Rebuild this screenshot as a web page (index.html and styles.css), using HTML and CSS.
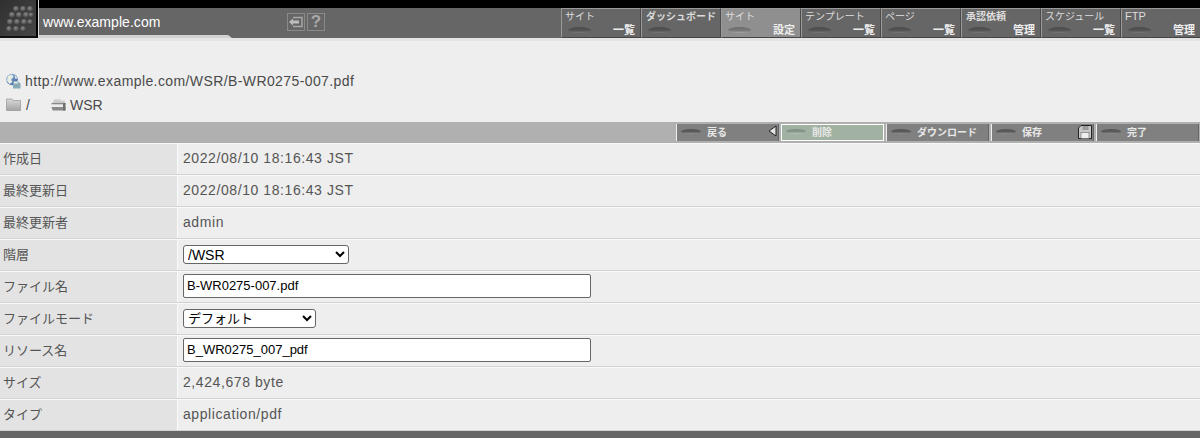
FILE: index.html
```html
<!DOCTYPE html>
<html lang="ja">
<head>
<meta charset="utf-8">
<title>ファイル詳細</title>
<link rel="stylesheet" href="styles.css">
</head>
<body>
<svg class="defs" width="0" height="0"><defs>
<radialGradient id="dot" cx="45%" cy="35%" r="70%"><stop offset="0" stop-color="#8c8c8c"/><stop offset="1" stop-color="#333"/></radialGradient>
<linearGradient id="fold" x1="0" y1="0" x2="0" y2="1"><stop offset="0" stop-color="#d8d8d8"/><stop offset="1" stop-color="#a4a4a4"/></linearGradient>
<linearGradient id="globe" x1="0" y1="0" x2="1" y2="1"><stop offset="0" stop-color="#a9c4e6"/><stop offset="1" stop-color="#2f5a96"/></linearGradient>
</defs></svg>
<header class="topbar">
  <div class="logo">
    <svg width="34" height="27" viewBox="0 0 34 27">
      <g fill="url(#dot)">
        <circle cx="16" cy="4" r="3"/><circle cx="23" cy="4" r="3"/><circle cx="30" cy="4" r="3"/>
        <circle cx="12" cy="10" r="3.100"/><circle cx="19" cy="10" r="3.100"/><circle cx="26" cy="10" r="3.100"/><circle cx="31" cy="10" r="2.600"/>
        <circle cx="10" cy="17" r="3.100"/><circle cx="17" cy="17" r="3.100"/><circle cx="24" cy="17" r="3.100"/><circle cx="30" cy="17" r="2.800"/>
        <circle cx="9" cy="24" r="2.900"/><circle cx="16" cy="24" r="2.900"/><circle cx="23" cy="24" r="2.900"/>
      </g>
    </svg>
  </div>
  <div class="topmain">
    <div class="blackline"></div>
    <div class="toprow">
      <div class="sitebox">
        <div class="sitename">www.example.com</div>
        <div class="sitetabs">
          <span class="iconbtn"><svg width="16" height="14" viewBox="0 0 16 14"><path d="M5 2.500H14V11.500H5" fill="none" stroke="#a8a8a8" stroke-width="1.4"/><path d="M1 7L5 3.500V5.600H11V8.400H5V10.500Z" fill="#bdbdbd"/></svg></span>
          <span class="iconbtn qmark">?</span>
        </div>
        <div class="siteedge"></div>
      </div>
      <nav class="nav">
        <a class="navbtn"><span class="navtop">サイト</span><span class="navbot"><i class="pill"></i><b>一覧</b></span></a>
        <a class="navbtn"><span class="navtop">ダッシュボード</span><span class="navbot"><i class="pill"></i></span></a>
        <a class="navbtn active"><span class="navtop">サイト</span><span class="navbot"><i class="pill"></i><b>設定</b></span></a>
        <a class="navbtn"><span class="navtop">テンプレート</span><span class="navbot"><i class="pill"></i><b>一覧</b></span></a>
        <a class="navbtn"><span class="navtop">ページ</span><span class="navbot"><i class="pill"></i><b>一覧</b></span></a>
        <a class="navbtn"><span class="navtop">承認依頼</span><span class="navbot"><i class="pill"></i><b>管理</b></span></a>
        <a class="navbtn"><span class="navtop">スケジュール</span><span class="navbot"><i class="pill"></i><b>一覧</b></span></a>
        <a class="navbtn"><span class="navtop">FTP</span><span class="navbot"><i class="pill"></i><b>管理</b></span></a>
      </nav>
    </div>
  </div>
</header>
<div class="strip"></div>
<section class="paths">
  <div class="urlline">
    <svg class="ico" width="16" height="16" viewBox="0 0 16 16"><circle cx="7" cy="6.500" r="5.800" fill="url(#globe)"/><path d="M3 3L7 1.500L8.500 4L6 6.500L7.500 9L4.500 11L2 7.500Z" fill="#e9eee4"/><path d="M9.500 2L12.500 5L10.500 6Z" fill="#eef2ee"/><path d="M8 8.500H13L15.500 10.500V15.500H8Z" fill="#87a9b6"/><path d="M9 8.500H12.500L13 10.500H9Z" fill="#e2e8ea"/></svg>
    <span>http://www.example.com/WSR/B-WR0275-007.pdf</span>
  </div>
  <div class="crumbs">
    <svg class="ico" width="15" height="13" viewBox="0 0 15 13"><path d="M.5 1H6L7 2.500H14.500V12.500H.5Z" fill="url(#fold)" stroke="#8c8c8c" stroke-width=".6"/></svg>
    <span class="crumb1">/</span>
    <svg class="ico" width="15" height="13" viewBox="0 0 15 13"><path d="M3 1H9L10 2.500H14V12H2V4Z" fill="url(#fold)"/><path d="M.5 5H14.500V6.400H.5ZM.5 9H14.500V12.500H1.500Z" fill="#8a8a8a"/><path d="M.5 6.400H14.500V9H.5Z" fill="#ececec"/><path d="M12 5H14.500V12.500H12Z" fill="#707070"/></svg>
    <span class="crumb2">WSR</span>
  </div>
</section>
<div class="actions">
  <a class="act"><i class="pill"></i><span>戻る</span><svg class="acticon" width="10" height="12" viewBox="0 0 10 12"><path d="M9 1V11L2 6Z" fill="#e4e4e4" stroke="#222" stroke-width="1"/></svg></a>
  <a class="act sel"><i class="pill"></i><span>削除</span></a>
  <a class="act"><i class="pill"></i><span>ダウンロード</span></a>
  <a class="act"><i class="pill"></i><span>保存</span><svg class="acticon" width="14" height="14" viewBox="0 0 14 14"><path d="M3 .5H13.500V13.500H.5V3Z" fill="#c8c8c8" stroke="#222"/><rect x="4.500" y="1" width="6" height="4" fill="#9a9a9a"/><rect x="3" y="7.500" width="8" height="6" fill="#eee" stroke="#666" stroke-width=".6"/></svg></a>
  <a class="act"><i class="pill"></i><span>完了</span></a>
</div>
<div class="rows">
  <div class="row"><div class="lab">作成日</div><div class="val">2022/08/10 18:16:43 JST</div></div>
  <div class="row"><div class="lab">最終更新日</div><div class="val">2022/08/10 18:16:43 JST</div></div>
  <div class="row"><div class="lab">最終更新者</div><div class="val">admin</div></div>
  <div class="row"><div class="lab">階層</div><div class="val"><select class="sel-path"><option>/WSR</option></select></div></div>
  <div class="row"><div class="lab">ファイル名</div><div class="val"><input class="txt" type="text" value="B-WR0275-007.pdf"></div></div>
  <div class="row"><div class="lab">ファイルモード</div><div class="val"><select class="sel-mode"><option>デフォルト</option></select></div></div>
  <div class="row"><div class="lab">リソース名</div><div class="val"><input class="txt" type="text" value="B_WR0275_007_pdf"></div></div>
  <div class="row"><div class="lab">サイズ</div><div class="val">2,424,678 byte</div></div>
  <div class="row"><div class="lab">タイプ</div><div class="val">application/pdf</div></div>
</div>
<footer class="foot"></footer>
</body>
</html>
```
FILE: styles.css
```css
html, body { margin: 0; padding: 0; height: 438px; overflow: hidden; }
body { background: #eeeeee; color: #4a4a4a; font-family: "Liberation Sans", "Noto Sans CJK JP", sans-serif; font-size: 14px; }
.defs { display: block; height: 0; }
.topbar { display: flex; height: 38px; background: #666; }
.logo { width: 36px; height: 36px; flex: none; background: linear-gradient(135deg, #303030, #464646); border-right: 2px solid #000; border-bottom: 2px solid #111; display: flex; align-items: center; }
.topmain { flex: 1; display: flex; flex-direction: column; border-left: 1px solid #d8d8d8; }
.blackline { height: 8px; background: #000; }
.toprow { flex: 1; display: flex; justify-content: space-between; }
.sitebox { width: 522px; position: relative; display: flex; }
.sitename { width: 192px; padding: 6px 0 0 4px; color: #fff; font-size: 14px; line-height: 17px; letter-spacing: .05px; }
.sitetabs { display: flex; gap: 2px; padding-top: 5px; margin-left: 52px; }
.iconbtn { width: 16px; height: 16px; border: 1px solid #8a8a8a; display: flex; align-items: center; justify-content: center; }
.qmark { color: #a9a9a9; font-weight: bold; font-size: 17px; line-height: 16px; }
.siteedge { position: absolute; left: 0; bottom: 0; width: 193px; height: 3px; background: #d2d2d2; clip-path: polygon(0 0, 98% 0, 100% 100%, 0 100%); }
.nav { display: flex; }
.navbtn { width: 80px; height: 30px; box-sizing: border-box; border-top: 1px solid #999; border-left: 1px solid #999; border-right: 1px solid #4a4a4a; border-bottom: 1px solid #444; background: #666; display: flex; flex-direction: column; color: #ddd; font-size: 10px; overflow: hidden; }
.navbtn.active { background: #8f8f8f; }
.navtop { height: 13px; line-height: 13px; padding: 1px 0 0 3px; white-space: nowrap; }
.navbtn:nth-child(2) .navtop, .navbtn:nth-child(6) .navtop { padding-left: 4px; font-weight: bold; }
.navbtn:last-child .navtop { font-size: 11px; }
.navbot { flex: 1; display: flex; align-items: center; justify-content: space-between; padding: 0 0 0 6px; }
.navbot b { font-size: 11px; color: #eee; padding-right: 5px; line-height: 13px; font-weight: bold; }
.pill { display: block; flex: none; width: 23px; height: 6px; border-radius: 50%; background: linear-gradient(#4c4c4c, #555 60%, #7c7c7c); }
.active .pill { background: linear-gradient(#6a6a6a, #7a7a7a 60%, #a8a8a8); }
.strip { height: 3px; background: #e4e4e4; }
.paths { height: 81px; box-sizing: border-box; padding-top: 31px; display: flex; flex-direction: column; gap: 7px; }
.urlline { display: flex; align-items: center; height: 17px; padding-left: 5px; gap: 4px; letter-spacing: .4px; }
.crumbs { display: flex; align-items: center; height: 17px; padding-left: 6px; }
.crumb1 { margin-left: 5px; width: 25px; }
.crumb2 { margin-left: 4px; }
.actions { height: 21px; box-sizing: border-box; padding: 2px 0 2px 676px; background: #b0b0b0; display: flex; gap: 2px; }
.act { box-sizing: border-box; height: 17px; width: 103px; background: #808080; border-left: 1px solid #eee; border-right: 1px solid #666; display: flex; align-items: center; position: relative; color: #e8e8e8; font-size: 10px; font-weight: bold; padding-left: 4px; }
.act .pill { width: 20px; height: 5px; margin-bottom: 2px; background: linear-gradient(#555, #5c5c5c 60%, #999); }
.act span { margin-left: 6px; padding-bottom: 2px; white-space: nowrap; }
.act.sel { background: #a2b2a2; border: 1px solid #fff; }
.act.sel .pill { background: linear-gradient(#7f8f7f, #8a9a8a 60%, #c0ccc0); }
.acticon { position: absolute; right: 1px; top: 1px; }
.row { display: flex; height: 32px; box-sizing: border-box; border-top: 1px solid #f8f8f8; border-bottom: 1px solid #d2d2d2; }
.lab { width: 178px; flex: none; background: #e3e3e3; border-right: 1px solid #fafafa; display: flex; align-items: center; padding: 0 0 3px 3px; box-sizing: border-box; font-size: 13px; color: #555; }
.val { flex: 1; display: flex; align-items: center; padding: 0 0 3px 5px; color: #555; letter-spacing: .58px; }
select { font-family: "Liberation Sans", "Noto Sans CJK JP", sans-serif; font-size: 14px; height: 19px; padding: 0; background: #fff; color: #000; border: 1px solid #666; border-radius: 3px; box-sizing: border-box; margin-top: 2px; }
.sel-path { width: 166px; }
.sel-mode { width: 133px; font-size: 13px; }
.txt { width: 408px; height: 24px; box-sizing: border-box; padding: 0 3px; font-family: "Liberation Sans", "Noto Sans CJK JP", sans-serif; font-size: 13px; color: #000; background: #fff; border: 1px solid #666; border-radius: 2px; }
.foot { height: 7px; background: #666; }
```
